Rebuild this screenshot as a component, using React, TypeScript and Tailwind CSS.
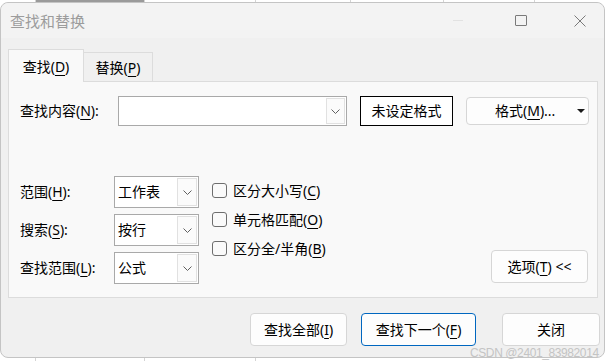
import React from 'react';

const font = { fontFamily: '"Noto Sans", "Noto Sans CJK SC", sans-serif' };

function U({ c }: { c: string }) {
  return <span className="underline decoration-1 underline-offset-[3px]">{c}</span>;
}

function Chevron() {
  return (
    <svg width="9" height="5" viewBox="0 0 9 5" fill="none">
      <path d="M0.5 0.5 L4.5 4.5 L8.5 0.5" stroke="#606060" strokeWidth="1" />
    </svg>
  );
}

function Select({ value }: { value: string }) {
  return (
    <div className="flex h-[32px] w-[85px] border border-[#a9a9a9] bg-white">
      <div className="flex flex-1 items-center pl-[3px] text-[14px] leading-[20px]">{value}</div>
      <div className="my-[1px] mr-[1px] flex w-[20px] items-center justify-center border border-[#e1e1e1] bg-[#fbfbfb]">
        <Chevron />
      </div>
    </div>
  );
}

function Check({ label, k }: { label: string; k: string }) {
  return (
    <div className="flex h-[29px] items-center gap-[6px]">
      <div className="h-[15px] w-[15px] rounded-[3px] border border-[#6e6e6e] bg-[#fafafa]" />
      <span className="text-[14px] leading-[20px]">
        {label}(<U c={k} />)
      </span>
    </div>
  );
}

export default function App() {
  return (
    <div className="relative h-[361px] w-[608px] overflow-hidden bg-white text-black" style={font}>
      {/* sheet behind */}
      <div className="flex h-[2px]">
        <div className="w-[36px] border-r border-[#d4d4d4]" />
        <div className="w-[109px] border-r border-[#d4d4d4] bg-[#9a9a9a]" />
        <div className="w-[111px] border-r border-[#d4d4d4]" />
        <div className="w-[95px] border-r border-[#d4d4d4]" />
        <div className="w-[93px] border-r border-[#d4d4d4]" />
        <div className="w-[91px] border-r border-[#d4d4d4]" />
      </div>

      <div className="flex h-[356px] w-[605px] flex-col rounded-[8px] border border-[#c4c4c4] bg-[#f0f0f0]">
        {/* title bar */}
        <div className="flex h-[35px] items-center rounded-t-[8px] bg-[#f3f3f3] pl-[9px]">
          <span className="text-[15px] leading-[20px] text-[#9c9c9c]">查找和替换</span>
          <div className="ml-auto flex items-center">
            <div className="mr-[52px] h-px w-[10px] bg-[#e2e2e2]" />
            <div className="mr-[47px] h-[11px] w-[12px] rounded-[1px] border border-[#7a7a7a]" />
            <svg width="12" height="12" viewBox="0 0 12 12" className="mr-[18px]">
              <path d="M0.5 0.5 L11.5 11.5 M11.5 0.5 L0.5 11.5" stroke="#7a7a7a" strokeWidth="1" />
            </svg>
          </div>
        </div>

        <div className="flex flex-1 flex-col pl-[7px] pr-[6px] pt-[11px]">
          {/* tabs */}
          <div className="flex h-[32px] items-end">
            <div className="relative z-10 -mb-px flex h-[33px] w-[76px] items-start justify-center border-x border-t border-[#dcdcdc] bg-[#f9f9f9] pt-[7px] text-[14px] leading-[20px]">
              <span>
                查找(<U c="D" />)
              </span>
            </div>
            <div className="flex h-[29px] w-[69px] items-start justify-center border-r border-t border-[#dcdcdc] bg-[#f0f0f0] pt-[5px] text-[14px] leading-[20px]">
              <span>
                替换(<U c="P" />)
              </span>
            </div>
          </div>

          {/* panel */}
          <div className="flex h-[217px] flex-col border border-[#dcdcdc] bg-[#f9f9f9] pl-[11px] pt-[14px]">
            <div className="flex h-[30px] items-center">
              <div className="w-[98px] text-[14px] leading-[20px]">
                查找内容(<U c="N" />):
              </div>
              <div className="flex h-[30px] w-[229px] border border-[#a9a9a9] bg-white">
                <div className="flex-1" />
                <div className="my-[1px] mr-[1px] flex w-[19px] items-center justify-center border border-[#e1e1e1] bg-[#fbfbfb]">
                  <Chevron />
                </div>
              </div>
              <div className="ml-[13px] flex h-[30px] w-[93px] items-center justify-center border border-black bg-white text-[14px] leading-[20px]">
                未设定格式
              </div>
              <div className="relative ml-[13px] flex h-[28px] w-[123px] items-center rounded-[4px] border border-[#d6d6d6] bg-[#fdfdfd] pl-[28px] text-[14px] leading-[20px]">
                <span>
                  格式(<U c="M" />)...
                </span>
                <svg width="8" height="4" viewBox="0 0 8 4" className="absolute right-[3px] top-[11px]">
                  <path d="M0 0 L8 0 L4 4 Z" fill="#1a1a1a" />
                </svg>
              </div>
            </div>

            <div className="mt-[50px] flex items-end">
              <div className="flex flex-col gap-[6px]">
                {[
                  ['范围', 'H', '工作表'],
                  ['搜索', 'S', '按行'],
                  ['查找范围', 'L', '公式'],
                ].map(([l, k, v]) => (
                  <div key={k} className="flex items-center">
                    <div className="w-[94px] text-[14px] leading-[20px]">
                      {l}(<U c={k} />):
                    </div>
                    <Select value={v} />
                  </div>
                ))}
              </div>
              <div className="ml-[13px] flex flex-col self-start">
                <Check label="区分大小写" k="C" />
                <Check label="单元格匹配" k="O" />
                <Check label="区分全/半角" k="B" />
              </div>
              <div className="mb-[1px] ml-auto mr-[9px] flex h-[33px] w-[97px] items-center justify-center rounded-[4px] border border-[#d6d6d6] bg-[#fdfdfd] text-[14px] leading-[20px]">
                <span>
                  选项(<U c="T" />) &lt;&lt;
                </span>
              </div>
            </div>
          </div>

          {/* bottom buttons */}
          <div className="-mr-[2px] mt-[15px] flex justify-end">
            <div className="flex h-[33px] w-[97px] items-center justify-center rounded-[4px] border border-[#d6d6d6] bg-[#fdfdfd] text-[14px] leading-[20px]">
              <span>
                查找全部(<U c="I" />)
              </span>
            </div>
            <div className="ml-[14px] flex h-[33px] w-[115px] items-center justify-center rounded-[4px] border border-[#0067c0] bg-[#fdfdfd] text-[14px] leading-[20px]">
              <span>
                查找下一个(<U c="F" />)
              </span>
            </div>
            <div className="ml-[26px] flex h-[33px] w-[98px] items-center justify-center rounded-[4px] border border-[#d6d6d6] bg-[#fdfdfd] text-[14px] leading-[20px]">
              关闭
            </div>
          </div>
        </div>
      </div>

      <div className="flex h-[3px]">
        <div className="w-[36px] border-r border-[#d4d4d4]" />
        <div className="w-[109px] border-r border-[#d4d4d4]" />
        <div className="w-[111px] border-r border-[#d4d4d4]" />
      </div>

      <div
        className="absolute left-[470px] top-[346px] whitespace-nowrap text-[12px] leading-[14px] tracking-[-0.4px] text-[#c4c4c4]"
        style={{ fontFamily: '"Liberation Sans", sans-serif' }}
      >
        CSDN @2401_83982014
      </div>
    </div>
  );
}
